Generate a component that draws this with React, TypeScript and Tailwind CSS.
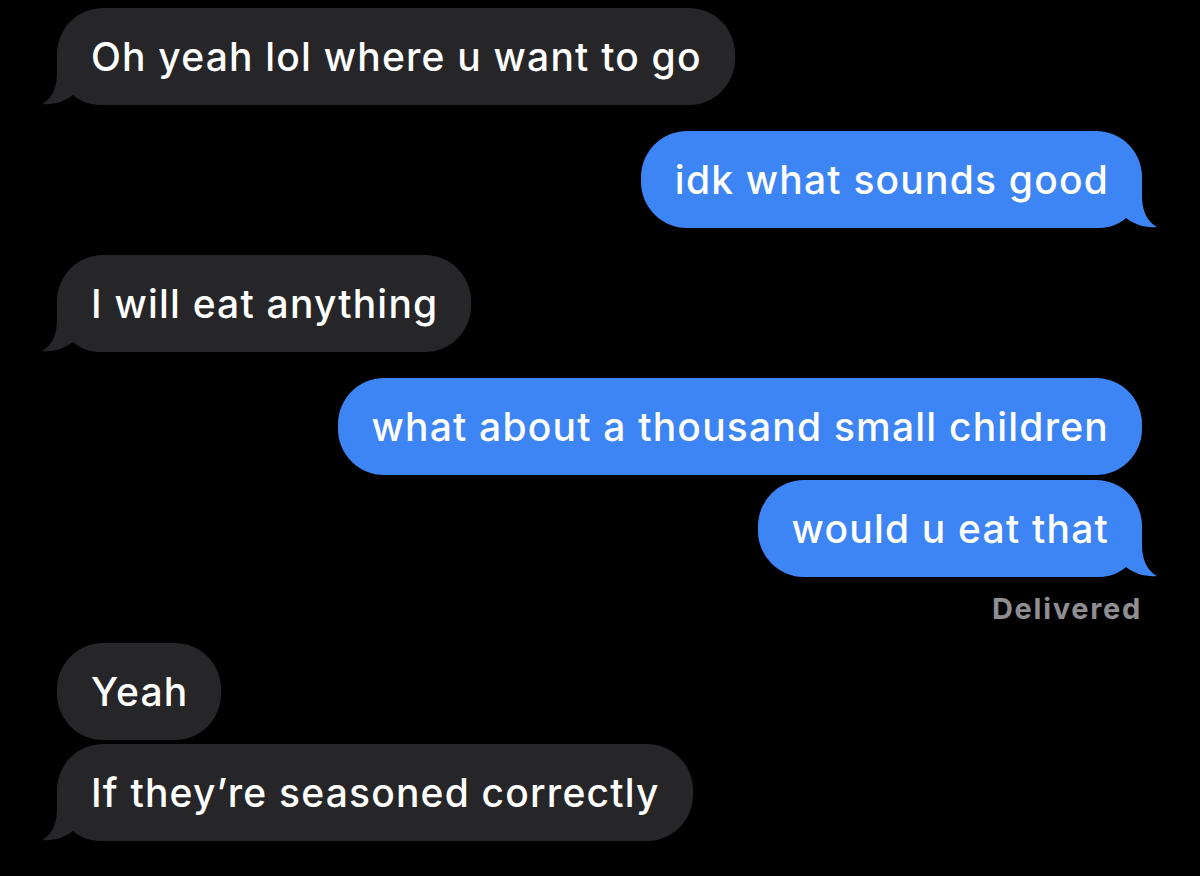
import React from "react";

type Msg = { text: string; me: boolean; tail: boolean; gap: string };

const messages: Msg[] = [
  { text: "Oh yeah lol where u want to go", me: false, tail: true, gap: "mt-0" },
  { text: "idk what sounds good", me: true, tail: true, gap: "mt-[26px]" },
  { text: "I will eat anything", me: false, tail: true, gap: "mt-[27px]" },
  { text: "what about a thousand small children", me: true, tail: false, gap: "mt-[26px]" },
  { text: "would u eat that", me: true, tail: true, gap: "mt-[5px]" },
];

const after: Msg[] = [
  { text: "Yeah", me: false, tail: false, gap: "mt-0" },
  { text: "If they\u2019re seasoned correctly", me: false, tail: true, gap: "mt-[4px]" },
];

function Tail({ me }: { me: boolean }) {
  // drawn for the left (incoming) side, mirrored for outgoing
  return (
    <svg
      width="60"
      height="50"
      viewBox="0 0 60 50"
      className={
        me
          ? "absolute -right-[15px] bottom-0 -scale-x-100 text-[#3d84f5]"
          : "absolute -left-[15px] bottom-0 text-[#262628]"
      }
    >
      <path
        d="M15 0 L15 18 C15 34 9 44 0 49 C11 50 22 47 31 40 C38 46 46 50 60 50 L60 0 Z"
        fill="currentColor"
      />
    </svg>
  );
}

function Bubble({ m }: { m: Msg }) {
  return (
    <div className={`flex ${m.me ? "justify-end" : "justify-start"} ${m.gap}`}>
      <div
        className={`relative rounded-[46px] pl-[34px] pr-[33px] py-[25px] text-[39px] font-medium leading-[47px] tracking-[1.2px] text-white ${
          m.me ? "bg-[#3d84f5]" : "bg-[#262628]"
        }`}
      >
        {m.tail && <Tail me={m.me} />}
        <span className="relative">{m.text}</span>
      </div>
    </div>
  );
}

export default function App() {
  return (
    <div
      className="h-[876px] w-[1200px] overflow-hidden bg-black pl-[57px] pr-[58px] pt-[8px]"
      style={{ fontFamily: "Inter, 'Noto Sans', sans-serif" }}
    >
      {messages.map((m, i) => (
        <Bubble key={i} m={m} />
      ))}
      <div className="mt-[15px] text-right text-[29px] font-bold leading-[34px] tracking-[1.7px] text-[#8e8e93]">
        Delivered
      </div>
      <div className="mt-[17px]">
        {after.map((m, i) => (
          <Bubble key={i} m={m} />
        ))}
      </div>
    </div>
  );
}
